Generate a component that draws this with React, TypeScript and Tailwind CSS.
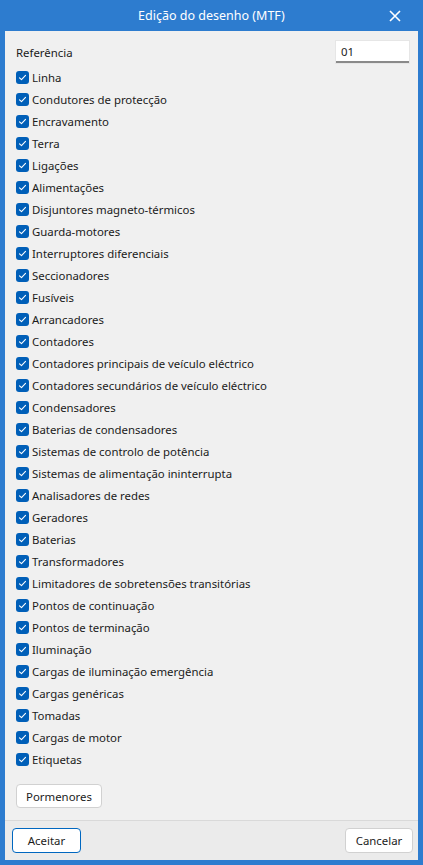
const items = [
  'Linha',
  'Condutores de protecção',
  'Encravamento',
  'Terra',
  'Ligações',
  'Alimentações',
  'Disjuntores magneto-térmicos',
  'Guarda-motores',
  'Interruptores diferenciais',
  'Seccionadores',
  'Fusíveis',
  'Arrancadores',
  'Contadores',
  'Contadores principais de veículo eléctrico',
  'Contadores secundários de veículo eléctrico',
  'Condensadores',
  'Baterias de condensadores',
  'Sistemas de controlo de potência',
  'Sistemas de alimentação ininterrupta',
  'Analisadores de redes',
  'Geradores',
  'Baterias',
  'Transformadores',
  'Limitadores de sobretensões transitórias',
  'Pontos de continuação',
  'Pontos de terminação',
  'Iluminação',
  'Cargas de iluminação emergência',
  'Cargas genéricas',
  'Tomadas',
  'Cargas de motor',
  'Etiquetas',
];

function Check() {
  return (
    <span className="flex h-[13px] w-[13px] shrink-0 items-center justify-center rounded-[3px] bg-[#005fb8]">
      <svg width="9" height="9" viewBox="0 0 9 9" fill="none">
        <path d="M1.5 4.8 L3.5 6.6 L7.5 2.4" stroke="white" strokeWidth="1.1" strokeLinecap="round" strokeLinejoin="round" />
      </svg>
    </span>
  );
}

export default function App() {
  return (
    <div
      className="flex h-[865px] w-[423px] flex-col bg-[#2d7ccf] text-[11.4px] text-[#1b1b1b]"
      style={{ fontFamily: '"Noto Sans", "Segoe UI", sans-serif' }}
    >
      <div className="relative flex h-[31px] shrink-0 items-center justify-center pt-[1px] text-[12.5px] text-white">
        Edição do desenho (MTF)
        <svg className="absolute right-[22px] top-[10px]" width="12" height="12" viewBox="0 0 12 12">
          <path d="M1 1 L11 11 M11 1 L1 11" stroke="white" strokeWidth="1.6" />
        </svg>
      </div>
      <div className="flex flex-1 flex-col px-[5px] pb-[5px]">
        <div className="flex flex-1 flex-col bg-[#f0f0f0]">
          <div className="flex flex-1 flex-col pl-[11px] pr-[9px] pt-[10px]">
            <div className="flex h-[22px] items-center justify-between">
              <span className="pt-[1px]">Referência</span>
              <div className="flex h-[22px] w-[73px] items-center border-b-2 border-[#8a8a8a] bg-white pl-[5px] pt-[1px] shadow-[0_0_0_1px_#e6e6e6]">
                01
              </div>
            </div>
            <div className="mt-[3px] flex flex-col">
              {items.map((t) => (
                <div key={t} className="flex h-[22px] items-center gap-[3px]">
                  <Check />
                  <span className="whitespace-nowrap pt-[2px]">{t}</span>
                </div>
              ))}
            </div>
            <div className="mt-[14px]">
              <button className="h-[24px] w-[86px] rounded-[4px] border border-[#d1d1d1] bg-white pt-[1px]">
                Pormenores
              </button>
            </div>
          </div>
          <div className="flex h-[40px] shrink-0 items-center justify-between border-t border-[#d9d9d9] bg-[#ebebeb] pl-[7px] pr-[5px]">
            <button className="h-[25px] w-[69px] rounded-[4px] border border-[#0067c0] bg-white pt-[1px]">Aceitar</button>
            <button className="h-[25px] w-[68px] rounded-[4px] border border-[#d1d1d1] bg-white pt-[1px]">Cancelar</button>
          </div>
        </div>
      </div>
    </div>
  );
}
